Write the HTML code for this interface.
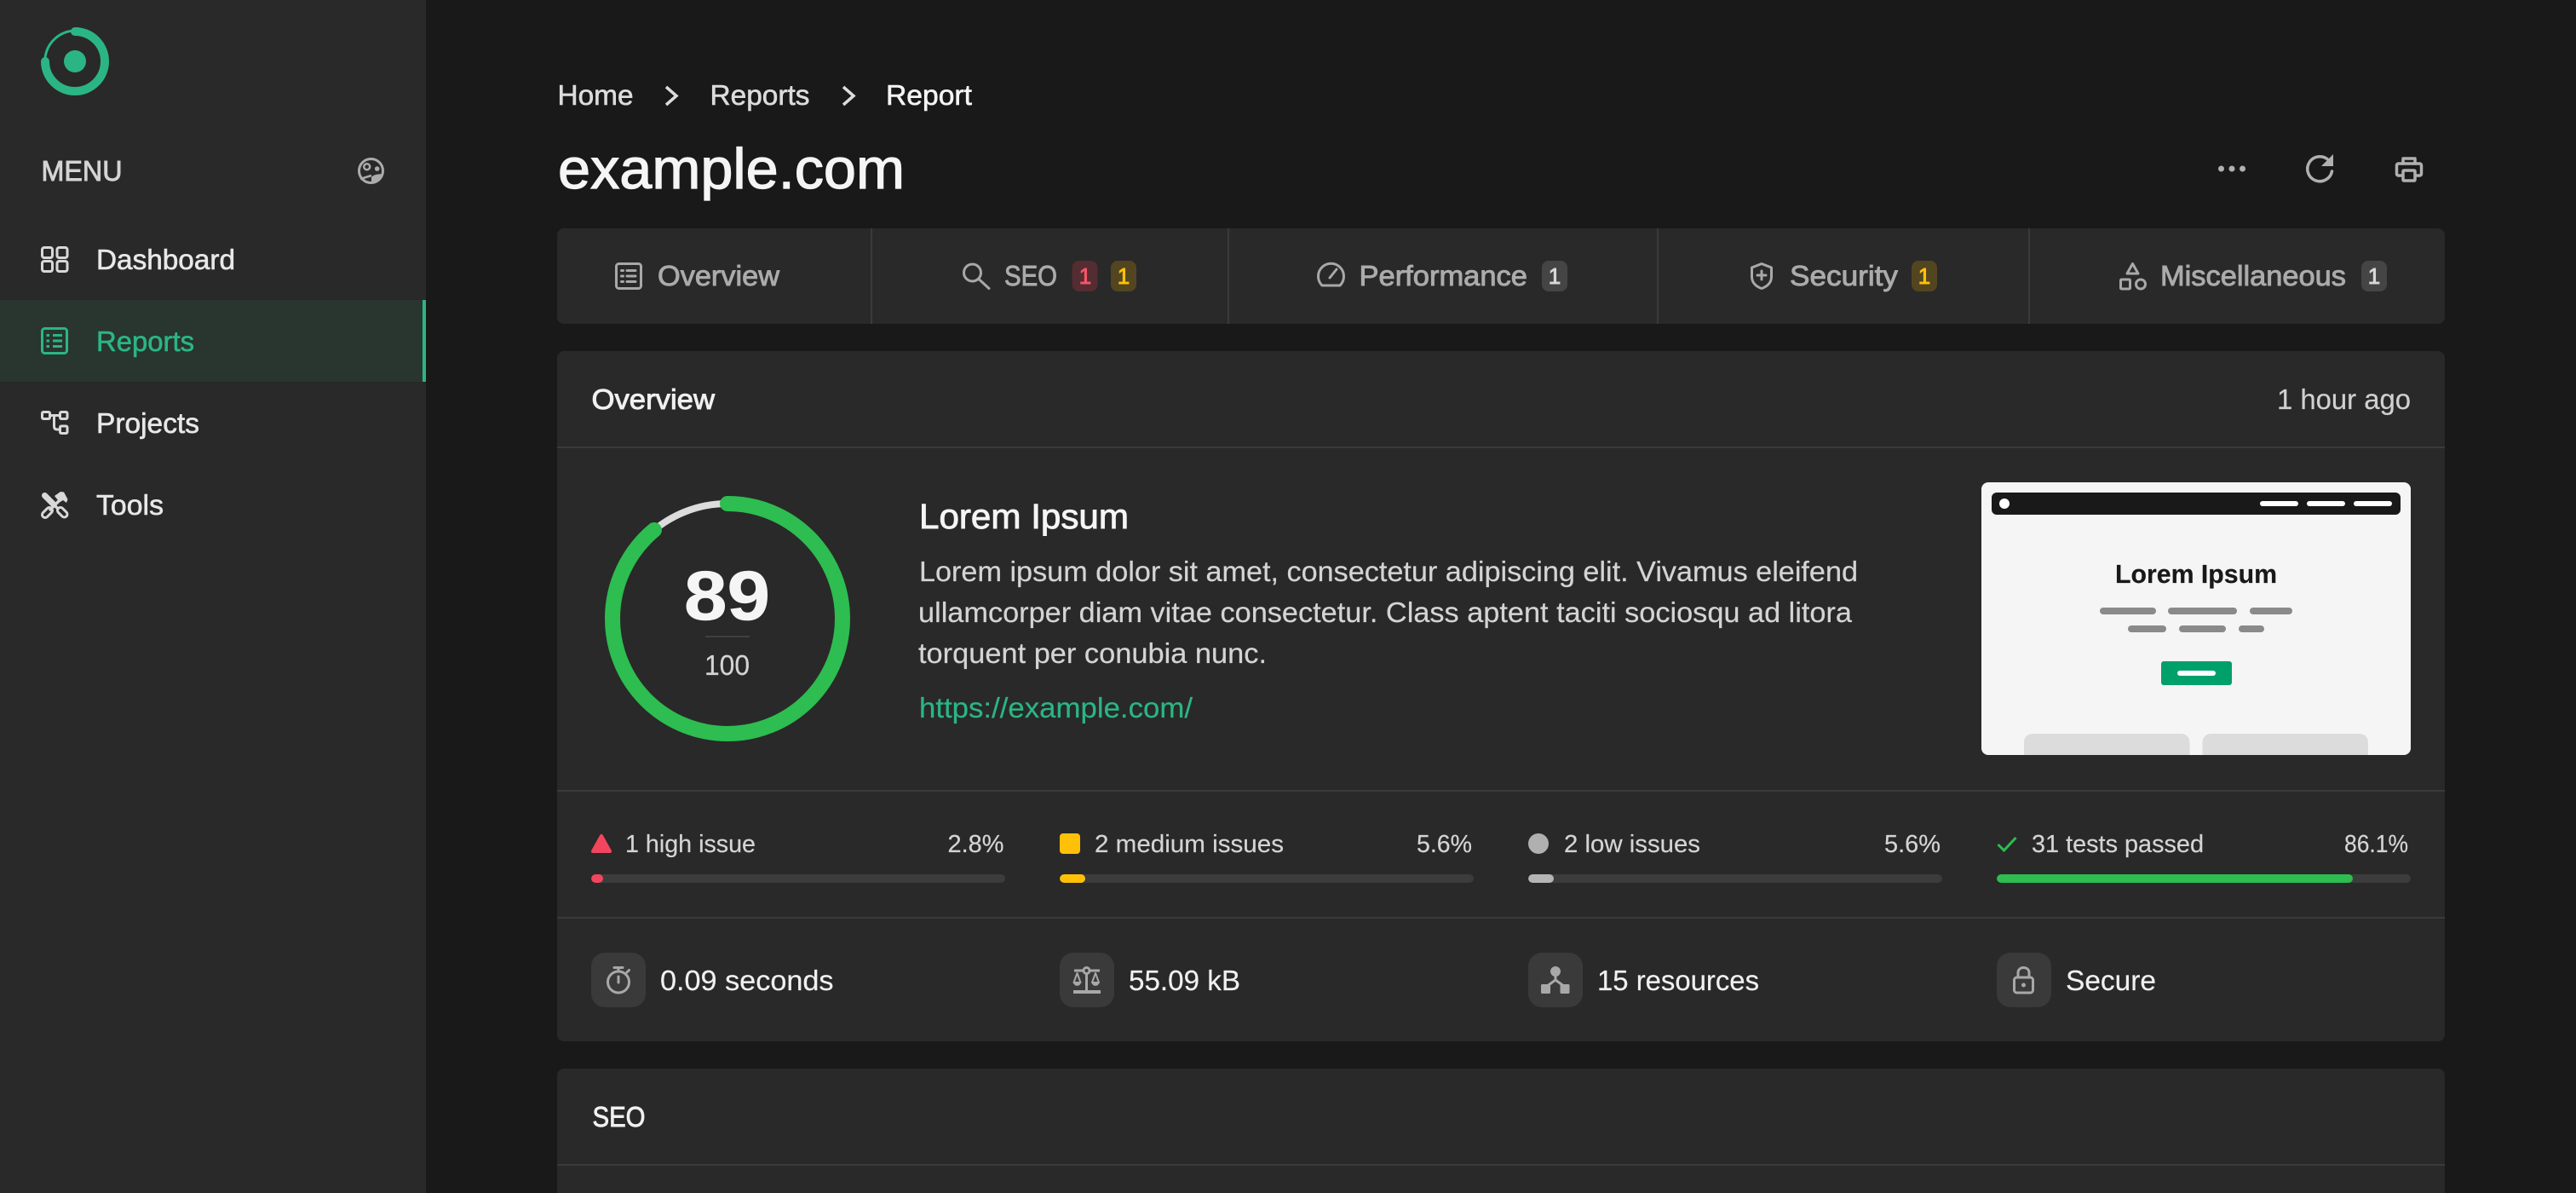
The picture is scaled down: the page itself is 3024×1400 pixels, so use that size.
<!DOCTYPE html>
<html lang="en">
<head>
<meta charset="utf-8">
<title>example.com - Report</title>
<style>
html,body{margin:0;padding:0;width:3024px;height:1400px;overflow:hidden;background:#191919;font-family:"Liberation Sans",sans-serif}
#page{position:relative;width:3024px;height:1400px;overflow:hidden;background:#191919}
.b{position:absolute}
#side{left:0;top:0;width:500px;height:1400px;background:#292929}
#active{left:0;top:352px;width:496px;height:96px;background:#29352f;border-right:4px solid #2bb585}
#tabs{left:654px;top:268px;width:2216px;height:112px;background:#292929;border-radius:8px}
.div{top:268px;width:2px;height:112px;background:#3a3a3a}
.card{left:654px;width:2216px;background:#292929;border-radius:8px}
.hr{left:654px;width:2216px;height:2px;background:#3a3a3a}
.track{height:10px;border-radius:5px;background:#3c3c3c;overflow:hidden}
.fill{height:10px;border-radius:5px}
.ib{top:1118px;width:64px;height:64px;border-radius:16px;background:#3a3a3a}
#shot{left:2326px;top:566px;width:504px;height:320px;background:#f5f5f5;border-radius:8px;overflow:hidden}
svg{position:absolute;left:0;top:0}
text{font-family:"Liberation Sans",sans-serif;fill:currentColor;stroke:currentColor;stroke-width:.2px}
text.m{stroke-width:.6px}
text.h{stroke-width:.9px}
.ic{fill:none;stroke:#a8a8a8;stroke-width:3;stroke-linecap:round;stroke-linejoin:round}
.if{fill:#a8a8a8;stroke:none}
</style>
</head>
<body>
<div id="page">
<div class="b" id="side"></div>
<div class="b" id="active"></div>
<div class="b" id="tabs"></div>
<div class="b div" style="left:1022px"></div>
<div class="b div" style="left:1441px"></div>
<div class="b div" style="left:1945px"></div>
<div class="b div" style="left:2381px"></div>
<div class="b card" style="top:412px;height:810px"></div>
<div class="b card" style="top:1254px;height:146px;border-radius:8px 8px 0 0"></div>
<div class="b hr" style="top:524px"></div>
<div class="b hr" style="top:927px"></div>
<div class="b hr" style="top:1076px"></div>
<div class="b hr" style="top:1366px"></div>

<div class="b track" style="left:694px;top:1026px;width:486px"><div class="fill" style="width:14px;background:#f4455e"></div></div>
<div class="b track" style="left:1244px;top:1026px;width:486px"><div class="fill" style="width:30px;background:#ffc107"></div></div>
<div class="b track" style="left:1794px;top:1026px;width:486px"><div class="fill" style="width:30px;background:#b5b5b5"></div></div>
<div class="b track" style="left:2344px;top:1026px;width:486px"><div class="fill" style="width:418px;background:#2dbd50"></div></div>

<div class="b ib" style="left:694px"></div>
<div class="b ib" style="left:1244px"></div>
<div class="b ib" style="left:1794px"></div>
<div class="b ib" style="left:2344px"></div>

<div class="b" id="shot"></div>

<svg width="3024" height="1400" viewBox="0 0 3024 1400" xmlns="http://www.w3.org/2000/svg">
<!-- logo -->
<circle cx="88" cy="72" r="13" fill="#2bb585"/>
<path d="M53 68A36 36 0 0 1 88 36" fill="none" stroke="#2bb585" stroke-width="3"/>
<path d="M88 37A35 35 0 1 1 53 72" fill="none" stroke="#2bb585" stroke-width="10" stroke-linecap="round"/>

<!-- menu -->
<text x="48.500" y="212" font-size="33" textLength="95" lengthAdjust="spacingAndGlyphs" class="h" style="color:#d4d4d4">MENU</text>
<circle cx="435.500" cy="200.500" r="14" fill="none" stroke="#ababab" stroke-width="3"/>
<circle cx="430.700" cy="195.700" r="3.500" fill="none" stroke="#ababab" stroke-width="2.500"/>
<circle cx="442.700" cy="198" r="2.800" fill="#ababab"/>
<path d="M436 215.500L436 208C438 205 445 203.500 449.500 204.500C449 210 443 215.500 436 215.500Z" fill="#ababab"/>
<path d="M423 210L436 206" fill="none" stroke="#ababab" stroke-width="2.500"/>

<!-- nav icons -->
<g fill="none" stroke="#d8d8d8" stroke-width="3">
<rect x="49.500" y="290.500" width="12" height="12" rx="2.500"/>
<rect x="67" y="290.500" width="12" height="12" rx="2.500"/>
<rect x="49.500" y="306.500" width="12" height="12" rx="2.500"/>
<rect x="67" y="306.500" width="12" height="12" rx="2.500"/>
</g>
<g fill="none" stroke="#2bb585" stroke-width="3">
<rect x="49.500" y="385.500" width="29" height="29" rx="3"/>
<path d="M62 393.500H73M62 400H73M62 406.500H73M54.500 393.500H58M54.500 400H58M54.500 406.500H58"/>
</g>
<g fill="none" stroke="#d8d8d8" stroke-width="3" stroke-linejoin="round">
<rect x="49.500" y="483.500" width="9" height="8" rx="1.500"/>
<rect x="70.500" y="483.500" width="8.500" height="8" rx="1.500"/>
<rect x="70.500" y="500" width="8.500" height="8.500" rx="1.500"/>
<path d="M58.500 487.500H70.500M63.500 487.500V500C63.500 503 65 504 67 504H70.500"/>
</g>
<g fill="none" stroke-linecap="round" stroke-linejoin="round">
<path d="M52.500 581.500L63 592" stroke="#d8d8d8" stroke-width="7"/>
<path d="M56 585L68 597" stroke="#d8d8d8" stroke-width="3.500"/>
<path d="M71 599L75.500 603.500" stroke="#d8d8d8" stroke-width="10"/>
<path d="M71 599L75.500 603.500" stroke="#292929" stroke-width="4"/>
<path d="M53 604L58 599" stroke="#d8d8d8" stroke-width="10"/>
<path d="M53 604L58 599" stroke="#292929" stroke-width="4"/>
<path d="M59 598L71 586" stroke="#d8d8d8" stroke-width="3.500"/>
</g>
<path d="M64 582L71 577L75 577.500L79.500 586L78 590L74 587L70 589.500Z" fill="#d8d8d8"/>
<text x="113" y="316" font-size="33" textLength="163" lengthAdjust="spacingAndGlyphs" class="m" style="color:#e8e8e8">Dashboard</text>
<text x="113" y="412" font-size="33" textLength="115" lengthAdjust="spacingAndGlyphs" class="m" style="color:#2bb585">Reports</text>
<text x="113" y="508" font-size="33" textLength="121" lengthAdjust="spacingAndGlyphs" class="m" style="color:#e8e8e8">Projects</text>
<text x="113" y="604" font-size="33" textLength="79" lengthAdjust="spacingAndGlyphs" class="m" style="color:#e8e8e8">Tools</text>

<!-- breadcrumb -->
<text x="654.500" y="123" font-size="33" textLength="89" lengthAdjust="spacingAndGlyphs" class="m" style="color:#dcdcdc">Home</text>
<path d="M782 102L794 112.500L782 123" fill="none" stroke="#dcdcdc" stroke-width="3.500"/>
<text x="833.500" y="123" font-size="33" textLength="117" lengthAdjust="spacingAndGlyphs" class="m" style="color:#dcdcdc">Reports</text>
<path d="M990 102L1002 112.500L990 123" fill="none" stroke="#dcdcdc" stroke-width="3.500"/>
<text x="1040" y="123" font-size="33" textLength="101" lengthAdjust="spacingAndGlyphs" class="m" style="color:#f5f5f5">Report</text>

<!-- title -->
<text x="655" y="221" font-size="67" textLength="407" lengthAdjust="spacingAndGlyphs" style="color:#f5f5f5;stroke-width:1.200px">example.com</text>

<!-- title actions -->
<circle cx="2607.500" cy="198" r="3.500" fill="#b0b0b0"/><circle cx="2620" cy="198" r="3.500" fill="#b0b0b0"/><circle cx="2632.500" cy="198" r="3.500" fill="#b0b0b0"/>
<path d="M2737.500 201A14.500 14.500 0 1 1 2733 187.500" class="ic" style="stroke-width:3.500;stroke:#b0b0b0"/>
<path d="M2739 181V195H2725Z" class="if" style="fill:#b0b0b0"/>
<g class="ic" style="stroke-width:3.500;stroke:#b0b0b0">
<path d="M2821 192V186H2835V192"/>
<rect x="2813.500" y="192" width="29" height="14" rx="2"/>
<rect x="2821" y="200" width="14" height="12" rx="1" fill="#191919"/>
</g>

<!-- tabs -->
<g class="ic">
<rect x="723.500" y="309.500" width="29" height="29" rx="3"/>
<path d="M736 317.500H746M736 324H746M736 330.500H746M729.500 317.500H731.500M729.500 324H731.500M729.500 330.500H731.500"/>
</g>
<text x="772" y="335" font-size="33" textLength="143" lengthAdjust="spacingAndGlyphs" class="h" style="color:#ababab">Overview</text>

<g class="ic"><circle cx="1141.500" cy="320" r="10"/><path d="M1149 327.500L1161 338.500"/></g>
<text x="1179" y="335" font-size="33" textLength="62" lengthAdjust="spacingAndGlyphs" class="h" style="color:#ababab">SEO</text>
<rect x="1258.500" y="306" width="30" height="36" rx="8" fill="#552c31"/>
<text x="1274" y="333" font-size="26" text-anchor="middle" class="h" style="color:#f4566a">1</text>
<rect x="1304" y="306" width="30" height="36" rx="8" fill="#534520"/>
<text x="1319" y="333" font-size="26" text-anchor="middle" class="h" style="color:#ffc107">1</text>

<g class="ic">
<path d="M1552 335A15 15 0 1 1 1573 335Z"/>
<path d="M1561 326L1569 316"/>
</g>
<text x="1595.500" y="335" font-size="33" textLength="197.500" lengthAdjust="spacingAndGlyphs" class="h" style="color:#ababab">Performance</text>
<rect x="1810" y="306" width="30" height="36" rx="8" fill="#454545"/>
<text x="1825" y="333" font-size="26" text-anchor="middle" class="h" style="color:#d8d8d8">1</text>

<g class="ic">
<path d="M2068 309.500L2079.500 314V325C2079.500 332 2074 336.500 2068 338.500C2062 336.500 2056.500 332 2056.500 325V314Z"/>
<path d="M2068 318V328M2063 323H2073"/>
</g>
<text x="2101" y="335" font-size="33" textLength="127" lengthAdjust="spacingAndGlyphs" class="h" style="color:#ababab">Security</text>
<rect x="2244" y="306" width="30" height="36" rx="8" fill="#534520"/>
<text x="2259" y="333" font-size="26" text-anchor="middle" class="h" style="color:#ffc107">1</text>

<g class="ic">
<path d="M2503.500 309.500L2510 321H2497Z"/>
<rect x="2489.500" y="328" width="11" height="11" rx="1"/>
<circle cx="2513" cy="333.500" r="5.500"/>
</g>
<text x="2536" y="335" font-size="33" textLength="218" lengthAdjust="spacingAndGlyphs" class="h" style="color:#ababab">Miscellaneous</text>
<rect x="2772" y="306" width="30" height="36" rx="8" fill="#454545"/>
<text x="2787" y="333" font-size="26" text-anchor="middle" class="h" style="color:#d8d8d8">1</text>

<!-- overview header -->
<text x="694.500" y="480" font-size="33" textLength="144.500" lengthAdjust="spacingAndGlyphs" class="h" style="color:#f0f0f0">Overview</text>
<text x="2673" y="480" font-size="33" textLength="157" lengthAdjust="spacingAndGlyphs" style="color:#d0d0d0">1 hour ago</text>

<!-- gauge -->
<circle cx="854" cy="726" r="135" fill="none" stroke="#dcdcdc" stroke-width="8"/>
<circle cx="854" cy="726" r="135" fill="none" stroke="#2dbd50" stroke-width="18" stroke-linecap="round" pathLength="100" stroke-dasharray="89 100" transform="rotate(-90 854 726)"/>
<text x="803" y="727" font-size="82" font-weight="700" textLength="101" lengthAdjust="spacingAndGlyphs" style="color:#f5f5f5;stroke-width:.6px">89</text>
<rect x="828" y="746" width="52" height="2" fill="#404040"/>
<text x="827" y="792" font-size="33" textLength="53" lengthAdjust="spacingAndGlyphs" style="color:#d4d4d4">100</text>

<!-- description -->
<text x="1079" y="620" font-size="41" textLength="246" lengthAdjust="spacingAndGlyphs" class="h" style="color:#f5f5f5">Lorem Ipsum</text>
<text x="1079" y="682" font-size="33" textLength="1102" lengthAdjust="spacingAndGlyphs" style="color:#d4d4d4">Lorem ipsum dolor sit amet, consectetur adipiscing elit. Vivamus eleifend</text>
<text x="1078" y="730" font-size="33" textLength="1096" lengthAdjust="spacingAndGlyphs" style="color:#d4d4d4">ullamcorper diam vitae consectetur. Class aptent taciti sociosqu ad litora</text>
<text x="1078" y="778" font-size="33" textLength="409" lengthAdjust="spacingAndGlyphs" style="color:#d4d4d4">torquent per conubia nunc.</text>
<text x="1079" y="842" font-size="33" textLength="321" lengthAdjust="spacingAndGlyphs" style="color:#2bb585">https://example.com/</text>

<!-- screenshot -->
<rect x="2338" y="578" width="480" height="26" rx="6" fill="#191919"/>
<circle cx="2353" cy="591" r="6" fill="#fff"/>
<g fill="#fff">
<rect x="2653" y="588" width="45" height="6" rx="3"/>
<rect x="2708" y="588" width="45" height="6" rx="3"/>
<rect x="2763" y="588" width="45" height="6" rx="3"/>
</g>
<rect x="2537" y="776" width="83" height="28" rx="3" fill="#00a06b"/>
<rect x="2556" y="787" width="45" height="6" rx="3" fill="#fff"/>
<text x="2483" y="684" font-size="31" font-weight="700" textLength="190" lengthAdjust="spacingAndGlyphs" style="color:#191919">Lorem Ipsum</text>
<g fill="#8a8a8a">
<rect x="2465" y="713" width="66" height="8" rx="4"/>
<rect x="2545" y="713" width="81" height="8" rx="4"/>
<rect x="2641" y="713" width="50" height="8" rx="4"/>
<rect x="2498" y="734" width="45" height="8" rx="4"/>
<rect x="2558" y="734" width="55" height="8" rx="4"/>
<rect x="2628" y="734" width="30" height="8" rx="4"/>
</g>
<path d="M2376 886V871A10 10 0 0 1 2386 861H2560.500A10 10 0 0 1 2570.500 871V886Z" fill="#dcdcdc"/>
<path d="M2585.500 886V871A10 10 0 0 1 2595.500 861H2770A10 10 0 0 1 2780 871V886Z" fill="#dcdcdc"/>

<!-- issues -->
<path d="M706 981L716 999H696Z" fill="#f4455e" stroke="#f4455e" stroke-width="4" stroke-linejoin="round"/>
<text x="734" y="1000" font-size="29" textLength="153" lengthAdjust="spacingAndGlyphs" style="color:#d4d4d4">1 high issue</text>
<text x="1112.500" y="1000" font-size="29" textLength="66" lengthAdjust="spacingAndGlyphs" style="color:#d4d4d4">2.8%</text>
<rect x="1244" y="978" width="24" height="24" rx="4" fill="#ffc107"/>
<text x="1285" y="1000" font-size="29" textLength="222" lengthAdjust="spacingAndGlyphs" style="color:#d4d4d4">2 medium issues</text>
<text x="1663" y="1000" font-size="29" textLength="65" lengthAdjust="spacingAndGlyphs" style="color:#d4d4d4">5.6%</text>
<circle cx="1806" cy="990" r="12" fill="#b0b0b0"/>
<text x="1836" y="1000" font-size="29" textLength="160" lengthAdjust="spacingAndGlyphs" style="color:#d4d4d4">2 low issues</text>
<text x="2212" y="1000" font-size="29" textLength="66" lengthAdjust="spacingAndGlyphs" style="color:#d4d4d4">5.6%</text>
<path d="M2345.500 991L2352.500 998L2366.500 983" fill="none" stroke="#2dbd50" stroke-width="3"/>
<text x="2385" y="1000" font-size="29" textLength="202" lengthAdjust="spacingAndGlyphs" style="color:#d4d4d4">31 tests passed</text>
<text x="2752" y="1000" font-size="29" textLength="75" lengthAdjust="spacingAndGlyphs" style="color:#d4d4d4">86.1%</text>

<!-- metrics -->
<g class="ic">
<circle cx="726" cy="1152.500" r="12.500"/>
<path d="M721 1135.500H731M726 1135.500V1140M726 1146V1153M736 1141L738.500 1138.500"/>
</g>
<text x="775" y="1162" font-size="33" textLength="203.500" lengthAdjust="spacingAndGlyphs" style="color:#f0f0f0">0.09 seconds</text>

<g class="ic" style="stroke-linecap:butt">
<path d="M1275.500 1142V1163" style="stroke-width:3"/>
<path d="M1261 1139H1291" style="stroke-width:3"/>
<path d="M1260 1164H1292" style="stroke-width:4"/>
<circle cx="1275.500" cy="1139" r="3.500" fill="#3a3a3a"/>
<path d="M1264.500 1142L1260.500 1153H1268.500Z" style="stroke-width:2"/>
<path d="M1286 1142L1282 1153H1290Z" style="stroke-width:2"/>
</g>
<path d="M1260 1152H1269C1269 1158.500 1260 1158.500 1260 1152ZM1281.500 1152H1290.500C1290.500 1158.500 1281.500 1158.500 1281.500 1152Z" class="if"/>
<text x="1325" y="1162" font-size="33" textLength="131" lengthAdjust="spacingAndGlyphs" style="color:#f0f0f0">55.09 kB</text>

<g>
<circle cx="1826" cy="1140" r="6" class="if"/>
<path d="M1826 1145V1150L1815 1158M1826 1150L1837 1158" class="ic" style="stroke-linecap:butt"/>
<rect x="1809" y="1155" width="11" height="11" rx="1.500" class="if"/>
<rect x="1831.500" y="1155" width="11" height="11" rx="1.500" class="if"/>
</g>
<text x="1875" y="1162" font-size="33" textLength="190" lengthAdjust="spacingAndGlyphs" style="color:#f0f0f0">15 resources</text>

<g class="ic">
<rect x="2364.500" y="1147" width="22" height="18" rx="3"/>
<path d="M2369 1147V1141.500C2369 1133.500 2382 1133.500 2382 1141.500V1147"/>
</g>
<circle cx="2375.500" cy="1156" r="2.500" class="if"/>
<text x="2425" y="1162" font-size="33" textLength="106" lengthAdjust="spacingAndGlyphs" style="color:#f0f0f0">Secure</text>

<!-- seo card -->
<text x="695.500" y="1322" font-size="33" textLength="62" lengthAdjust="spacingAndGlyphs" class="h" style="color:#f0f0f0">SEO</text>
</svg>
</div>
</body>
</html>
